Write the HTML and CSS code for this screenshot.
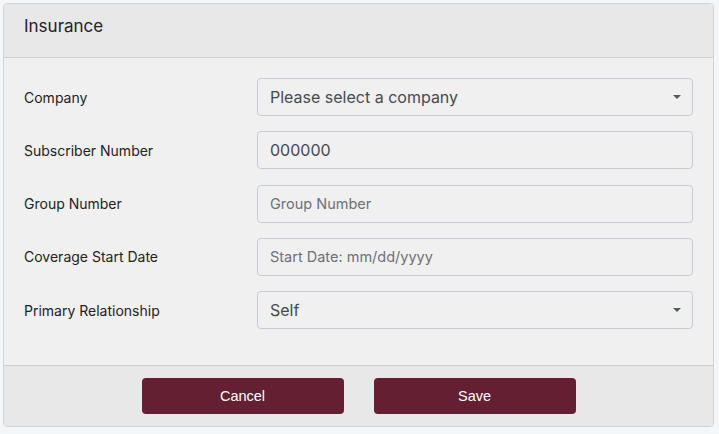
FILE: index.html
```html
<!DOCTYPE html>
<html>
<head>
<meta charset="utf-8">
<link rel="stylesheet" href="styles.css">
</head>
<body>
<div class="card">
  <div class="card-header">Insurance</div>
  <div class="card-body">
    <div class="row">
      <label class="label">Company</label>
      <div class="control select">
        <span class="value">Please select a company</span>
        <span class="caret"></span>
      </div>
    </div>
    <div class="row">
      <label class="label">Subscriber Number</label>
      <div class="control"><span class="value">000000</span></div>
    </div>
    <div class="row">
      <label class="label">Group Number</label>
      <div class="control"><span class="placeholder">Group Number</span></div>
    </div>
    <div class="row">
      <label class="label">Coverage Start Date</label>
      <div class="control"><span class="placeholder">Start Date: mm/dd/yyyy</span></div>
    </div>
    <div class="row">
      <label class="label">Primary Relationship</label>
      <div class="control select">
        <span class="value">Self</span>
        <span class="caret"></span>
      </div>
    </div>
  </div>
  <div class="card-footer">
    <button class="btn">Cancel</button>
    <button class="btn">Save</button>
  </div>
</div>
</body>
</html>
```

FILE: styles.css
```css
html, body {
  margin: 0;
  padding: 0;
  background: #f4f7fa;
}
body {
  padding: 3px 5px 0 3px;
  font-family: Inter, "Liberation Sans", sans-serif;
  color: #212529;
}
.card {
  width: 709px;
  border: 1px solid #d3d3d3;
  border-radius: 4px;
  background: #f0f0f0;
  overflow: hidden;
}
.card-header {
  height: 54px;
  box-sizing: border-box;
  padding: 12px 20px 0 20px;
  background: #e8e8e8;
  border-bottom: 1px solid #cfcfcf;
  font-size: 17px;
  line-height: 20px;
  color: #222;
}
.card-body {
  padding: 20px 20px 36px 20px;
  display: flex;
  flex-direction: column;
  gap: 15.25px;
}
.row {
  display: grid;
  grid-template-columns: 233px 1fr;
  align-items: center;
}
.label {
  font-size: 14px;
  color: #222;
}
.control {
  height: 38px;
  box-sizing: border-box;
  border: 1px solid #c6cbd4;
  border-radius: 4px;
  display: flex;
  align-items: center;
  padding: 0 12px;
  justify-content: space-between;
}
.value {
  font-size: 16px;
  color: #454a50;
}
.placeholder {
  font-size: 14.5px;
  color: #6c7177;
}
.caret {
  width: 0;
  height: 0;
  border-left: 4px solid transparent;
  border-right: 4px solid transparent;
  border-top: 4px solid #555a60;
  margin-right: -1px;
}
.card-footer {
  height: 61px;
  box-sizing: border-box;
  border-top: 1px solid #cfcfcf;
  background: #e8e8e8;
  display: flex;
  justify-content: center;
  align-items: center;
  gap: 30px;
}
.btn {
  width: 202px;
  height: 36px;
  border: none;
  border-radius: 4px;
  background: #651f32;
  color: #fff;
  font-family: "Liberation Sans", Arial, sans-serif;
  font-size: 14.5px;
}
```
